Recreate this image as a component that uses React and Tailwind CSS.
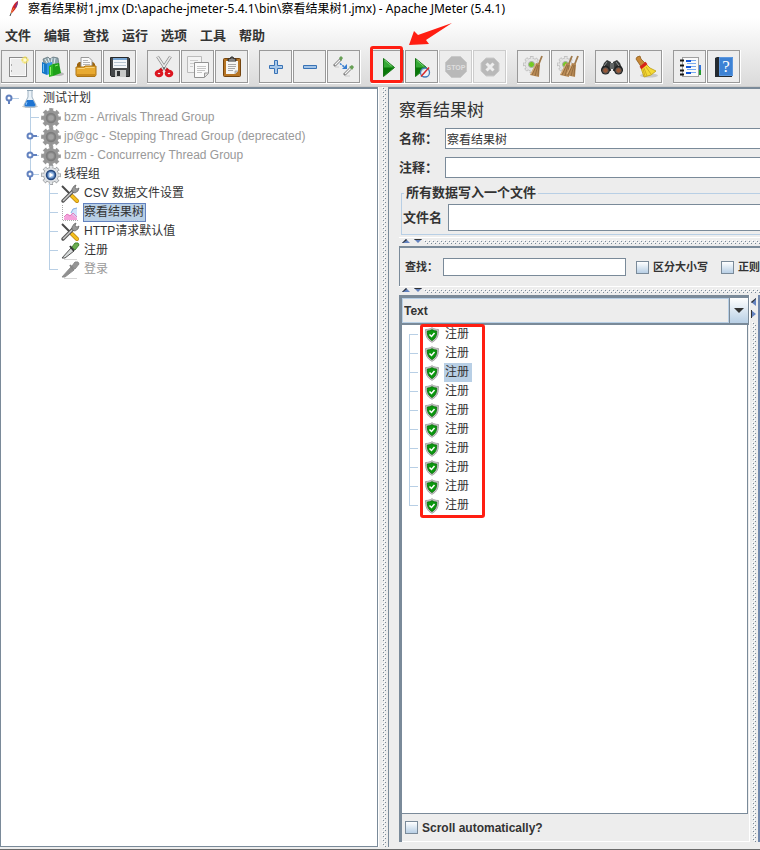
import React from "react";

const dots =
  "bg-[#ededed] bg-[conic-gradient(from_270deg_at_1px_1px,#7a8a99_90deg,transparent_0),conic-gradient(from_270deg_at_1px_1px,#7a8a99_90deg,transparent_0),conic-gradient(from_270deg_at_1px_1px,#ffffff_90deg,transparent_0),conic-gradient(from_270deg_at_1px_1px,#ffffff_90deg,transparent_0)] [background-size:4px_4px] [background-position:1px_1px,3px_3px,0px_0px,2px_2px]";

function Svg({ size = "size-6", box = "0 0 24 24", children }) {
  return (
    <svg viewBox={box} className={`${size} shrink-0`} fill="none" aria-hidden="true">
      {children}
    </svg>
  );
}

function GearBody({ fill, edge }) {
  return (
    <>
      <circle cx="10" cy="10" r="7.900" stroke={edge} strokeWidth="4" strokeDasharray="3.700 2.504" strokeDashoffset="1.850" />
      <circle cx="10" cy="10" r="7.500" fill={fill} stroke={edge} strokeWidth=".8" />
      <circle cx="10" cy="10" r="7.900" stroke={fill} strokeWidth="2.600" strokeDasharray="2.600 3.604" strokeDashoffset="1.300" />
    </>
  );
}

/* ---------- toolbar icons ---------- */

const NewIcon = () => (
  <Svg>
    <rect x="3.5" y="2.500" width="17" height="19" fill="#ececec" stroke="#8a8a8a" />
    <rect x="4.5" y="3.500" width="15" height="17" stroke="#fafafa" />
    <path d="M5.500 9v2M5.500 15v2" stroke="#aaa" />
    <circle cx="19" cy="5" r="3.500" fill="#f5e46a" opacity=".6" />
    <path d="M19 1.500v7M15.500 5h7" stroke="#f4dc3c" />
    <circle cx="19" cy="5" r="1.800" fill="#fffbd0" />
  </Svg>
);

const TemplatesIcon = () => (
  <Svg>
    <ellipse cx="17" cy="19" rx="7" ry="2" fill="#b9b9b9" />
    <path d="M3 4l5-2 2 2 3-2 5 1 1 7-14 2z" fill="#8fa4ac" stroke="#5a6d75" strokeWidth=".7" />
    <path d="M5 4l3 5M8 3l2 6M12 3l-1 6M15 3l-1 6" stroke="#e1f0f6" />
    <path d="M2 7l5 2v11l-5-2z" fill="#1677c8" />
    <path d="M7 8l5-1v11l-5 2z" fill="#3596e0" />
    <path d="M3.500 9v8" stroke="#6ebdf4" />
    <path d="M9 11l4-2v12l-4 1z" fill="#2fb824" />
    <path d="M13 9l6-1 2 10-8 3z" fill="#1da019" />
    <path d="M10.500 12v8M15 11l3-1" stroke="#8eee6e" />
  </Svg>
);

const OpenIcon = () => (
  <Svg>
    <path d="M3 9l2-2h14l2 2v11H3z" fill="#9c6410" />
    <path d="M7 2.500h8l3 3V14H7z" fill="#fafafa" stroke="#999" />
    <path d="M9 5.500h5M9 7.500h7M9 9.500h7" stroke="#b5b5b5" />
    <path d="M2 12h8l1-1h11v9l-1 1.500H3L2 20z" fill="#e8aa31" stroke="#ad7515" />
    <path d="M3.500 13.500h7l1-1h9" stroke="#f7d37c" />
    <path d="M3 19h18v2H3z" fill="#cb8b1d" />
  </Svg>
);

const SaveIcon = () => (
  <Svg>
    <path d="M2.500 2.500h18l1 1v18h-18l-1-1z" fill="#45484a" stroke="#262829" />
    <rect x="5" y="3" width="14" height="10" fill="#f3f6f9" />
    <path d="M5 4h14" stroke="#76a5d4" strokeWidth="2" />
    <path d="M6 7.500h12M6 10.500h12" stroke="#b7c5d2" />
    <rect x="7" y="15" width="11" height="7" fill="#c8cac9" />
    <rect x="9" y="16" width="3" height="5" fill="#303335" />
  </Svg>
);

const CutIcon = () => (
  <Svg>
    <path d="M5.500 1.500l8.500 13M18.500 1.500L10 14.500" stroke="#888" strokeWidth="3" />
    <path d="M5.500 1.500l8.500 13M18.500 1.500L10 14.500" stroke="#e9e9e9" strokeWidth="1.500" />
    <path d="M10 14l-3 3M14 14l3 3" stroke="#c81018" strokeWidth="3.500" />
    <ellipse cx="7" cy="18.500" rx="2.800" ry="2.300" stroke="#dc1721" strokeWidth="3" />
    <ellipse cx="17" cy="18.500" rx="2.800" ry="2.300" stroke="#dc1721" strokeWidth="3" />
    <circle cx="12" cy="13" r="1" fill="#555" />
  </Svg>
);

const CopyIcon = () => (
  <Svg>
    <path d="M1.500 1.500h14v16h-14z" fill="#f3f3f3" stroke="#bbb" />
    <path d="M4 5.500h8M4 8.500h5M4 11.500h3" stroke="#ccc" />
    <path d="M8.500 7.500h14v11l-4 4h-10z" fill="#fafafa" stroke="#929292" />
    <path d="M11 11.500h9M11 13.500h9M11 15.500h8M11 17.500h5" stroke="#c5c5c5" />
    <path d="M18.500 22v-4h4" fill="#ddd" stroke="#999" />
  </Svg>
);

const PasteIcon = () => (
  <Svg>
    <rect x="3.500" y="3.500" width="17" height="18" rx="1" fill="#b77524" stroke="#744510" />
    <path d="M6 6h12v10l-3 3H6z" fill="#f6f6f4" />
    <path d="M8 9.500h8M8 11.500h8M8 13.500h7M8 15.500h5" stroke="#a9a9a9" />
    <path d="M15 19v-3h3" fill="#ccc" stroke="#999" strokeWidth=".7" />
    <path d="M8 6V4h2l1-2h2l1 2h2v2z" fill="#666" stroke="#303030" />
    <path d="M9 5h6" stroke="#aaa" />
  </Svg>
);

const PlusIcon = () => (
  <Svg>
    <path d="M10.500 5.500h3v5h5v3h-5v5h-3v-5h-5v-3h5z" fill="#b6d2ee" stroke="#3872b5" />
    <path d="M12 6.500v11M6.500 12h11" stroke="#9cc0e6" />
  </Svg>
);

const MinusIcon = () => (
  <Svg>
    <path d="M5.500 10.500h13v3h-13z" fill="#a2c4e8" stroke="#3872b5" />
  </Svg>
);

const ToggleIcon = () => (
  <Svg>
    <path d="M2 11l7-7" stroke="#808080" strokeWidth="2.800" />
    <path d="M3 10l5-5" stroke="#f5f5f5" strokeWidth="1.300" />
    <path d="M7 3l2-2 2 2-2 3z" fill="#679f55" />
    <path d="M12 20l6-6" stroke="#808080" strokeWidth="2.800" />
    <path d="M13 19l5-5" stroke="#f5f5f5" strokeWidth="1.300" />
    <path d="M17 12l3-2 2 2-2 3z" fill="#679f55" />
    <path d="M8 8.500l5 4" stroke="#367dd0" strokeWidth="1.500" strokeDasharray="2 1" />
    <path d="M15 9v5h-5z" fill="#367dd0" />
    <path d="M3 12h4M13 21h5" stroke="#cbcbcb" />
  </Svg>
);

const Play = () => (
  <>
    <path d="M7.500 3.500l11 9-11 9z" fill="#36a936" stroke="#167316" />
    <path d="M8 12.500h10l-10 8z" fill="#087808" />
    <path d="M8.500 5l7 6" stroke="#7dd577" />
  </>
);

const StartIcon = () => (
  <Svg>
    <Play />
  </Svg>
);

const StartNoPauseIcon = () => (
  <Svg>
    <g transform="translate(-2 0)">
      <Play />
    </g>
    <circle cx="15" cy="17.500" r="4.500" fill="#eaf2fa" fillOpacity=".85" stroke="#437cb8" strokeWidth="1.300" />
    <path d="M11 21.500l8-9" stroke="#d92828" strokeWidth="1.500" />
  </Svg>
);

const StopIcon = () => (
  <Svg>
    <path d="M7.500 1.500h9l6 6v9l-6 6h-9l-6-6v-9z" fill="#b9b9b9" stroke="#c9c9c9" />
    <text x="12" y="15" textAnchor="middle" fontSize="7" fontWeight="700" fontFamily="Liberation Sans, sans-serif" fill="#dedede">
      STOP
    </text>
  </Svg>
);

const ShutdownIcon = () => (
  <Svg>
    <path d="M8 3h8l5 5v8l-5 5H8l-5-5V8z" fill="#b9b9b9" stroke="#cacaca" />
    <path d="M8.500 8.500l7 7M15.500 8.500l-7 7" stroke="#eeeeee" strokeWidth="3" />
  </Svg>
);

const Broom = ({ x = 0 }) => (
  <g transform={`translate(${x} 0)`}>
    <path d="M22 1l-4 10" stroke="#a07a4c" strokeWidth="1.800" />
    <path d="M16 8l4 1-1 13-9-2z" fill="#ba8b55" />
    <path d="M17 9l-5 11M18 10l-3 11M19 10l-1 11" stroke="#8f6a40" strokeWidth=".9" />
    <path d="M16 9l-5 10" stroke="#dcb483" />
  </g>
);

const PaleGear = () => (
  <>
    <g transform="translate(1 1) scale(.85)">
      <GearBody fill="#e4e4e4" edge="#b4b4b4" />
    </g>
    <circle cx="9.500" cy="9.500" r="3" fill="#73cb23" stroke="#aaa" />
  </>
);

const ClearIcon = () => (
  <Svg>
    <PaleGear />
    <Broom x={-2} />
  </Svg>
);

const ClearAllIcon = () => (
  <Svg>
    <PaleGear />
    <Broom x={-6} />
    <Broom />
  </Svg>
);

const SearchIcon = () => (
  <Svg>
    <path d="M4 8l3-3 4 2v9H1zM13 7l4-2 3 3 3 8H13z" fill="#383b3b" />
    <path d="M10 8h4v6h-4z" fill="#626666" />
    <circle cx="5.500" cy="15" r="4.500" fill="#202222" />
    <circle cx="18.500" cy="15" r="4.500" fill="#202222" />
    <circle cx="5.500" cy="15.500" r="2.800" fill="#985837" stroke="#555" />
    <circle cx="18.500" cy="15.500" r="2.800" fill="#985837" stroke="#555" />
    <path d="M7 7l-3 4M16 7l3 4" stroke="#8d9191" />
  </Svg>
);

const ResetSearchIcon = () => (
  <Svg>
    <ellipse cx="15" cy="20.500" rx="9" ry="2" fill="#c9c9c9" />
    <path d="M3 2l3-1 1 3 5 5-4 4-4-6-2-3z" fill="#c78735" stroke="#8f5c19" strokeWidth=".8" />
    <path d="M12 9l4 4 6 3-5 4-7 2-3-9z" fill="#f5da35" stroke="#bb9c14" strokeWidth=".8" />
    <path d="M10 13l3 8M12 12l5 7M9 14l2 7" stroke="#cfae20" />
    <path d="M6.500 13l6-5" stroke="#d82319" strokeWidth="3" />
  </Svg>
);

const FunctionIcon = () => (
  <Svg>
    <path d="M21 10h2v5h-2z" fill="#3274d8" />
    <path d="M21 15h2v5h-2z" fill="#239a2e" />
    <rect x="4.500" y="2.500" width="16" height="19" fill="#fafafa" stroke="#a0a0a0" />
    <path d="M2 5.500h4M2 10.500h4M2 15.500h4M2 19.500h4" stroke="#151515" strokeWidth="2" />
    <path d="M8 6h5M8 12h5M8 18h5" stroke="#1156d8" strokeWidth="2" />
    <path d="M9 8.500h9M13 5.500h5M9 14.500h9M13 11.500h5M13 17.500h5" stroke="#79aaf0" />
  </Svg>
);

const HelpIcon = () => (
  <Svg>
    <path d="M3 3l2-1h15v20H3z" fill="#252b31" />
    <path d="M7 2h14v19H7z" fill="#3d82d4" />
    <path d="M7.500 2.500h13v18h-13z" stroke="#5c97de" />
    <text x="14" y="17" textAnchor="middle" fontSize="17" fontFamily="Liberation Serif, serif" fill="#fff">
      ?
    </text>
  </Svg>
);

const groups = [
  [["新建", NewIcon], ["模板", TemplatesIcon], ["打开", OpenIcon], ["保存", SaveIcon]],
  [["剪切", CutIcon], ["复制", CopyIcon], ["粘贴", PasteIcon]],
  [["展开", PlusIcon], ["折叠", MinusIcon], ["切换", ToggleIcon]],
  [["启动", StartIcon], ["不停顿开始", StartNoPauseIcon], ["停止", StopIcon, true], ["关闭", ShutdownIcon, true]],
  [["清除", ClearIcon], ["清除全部", ClearAllIcon]],
  [["查找", SearchIcon], ["重置搜索", ResetSearchIcon]],
  [["函数助手", FunctionIcon], ["帮助", HelpIcon]],
];

/* ---------- tree icons ---------- */

const Flask = () => (
  <Svg size="size-5" box="0 0 20 20">
    <ellipse cx="10" cy="17.500" rx="8" ry="1.500" fill="#c8c8c8" />
    <path d="M8 2v6l-4 8 1 2h10l1-2-4-8V2" fill="#eaf2f8" stroke="#9fb2c2" />
    <path d="M7 11h6l2.500 5-1 1.500h-9l-1-1.500z" fill="#1f74d2" />
    <path d="M7 13l-1 3" stroke="#8ec4fa" />
    <path d="M7 1.500h6" stroke="#8fa5b5" />
  </Svg>
);

const Gear = ({ on }) => (
  <Svg size="size-5" box="0 0 20 20">
    <GearBody fill={on ? "#dfe2e5" : "#969696"} edge={on ? "#96999c" : "#9c9c9c"} />
    <circle cx="10" cy="10" r="4.500" fill={on ? "#5b86c0" : "#8a8a8a"} stroke={on ? "#24477c" : "#7d7d7d"} strokeWidth="1.500" />
    <circle cx="10" cy="10" r="2.800" fill={on ? "#9abbe3" : "#a2a2a2"} />
    {on && <path d="M8.500 7.500l4 2.500-4 2.500z" fill="#fff" />}
  </Svg>
);

const Tools = () => (
  <Svg size="size-5" box="0 0 20 20">
    <path d="M2 2l9 9" stroke="#4a4a4a" strokeWidth="2" />
    <path d="M12 12l5 5" stroke="#b77d0b" strokeWidth="4" strokeLinecap="round" />
    <path d="M12 12l5 5" stroke="#f4c01e" strokeWidth="2.800" strokeLinecap="round" />
    <path d="M3 17L14 6" stroke="#555" strokeWidth="3.500" strokeLinecap="round" />
    <path d="M3 17L14 6" stroke="#ccc" strokeWidth="1.500" />
    <path d="M12 5l2-3 2-1-1 3 2 1 2-1-1 3-3 2-3-1z" fill="#999" stroke="#606060" strokeWidth=".7" />
  </Svg>
);

const Graph = () => (
  <Svg size="size-5" box="0 0 20 20">
    <path d="M2.500 2v15.500H18" stroke="#aaa" strokeDasharray="1 1" />
    <path d="M11 10l2-4 4-1v10h-6z" fill="#cfe3fa" />
    <path d="M11 10l2-4 4-1" stroke="#83acde" />
    <path d="M4 15l3-4 3 1 2-1 5 4v2H4z" fill="#f5a2db" />
    <path d="M4 14l3-3 3 2 3-3 4 4" stroke="#e07cc0" />
  </Svg>
);

const Dropper = ({ off }) => (
  <Svg size="size-5" box="0 0 20 20">
    <path d="M4 18.500h13" stroke="#d8d8d8" />
    <path d="M2 17l9-10 3 3-9 7z" fill={off ? "#8f8f8f" : "#d6dada"} stroke={off ? "#8f8f8f" : "#555"} />
    <path d="M10 5l4 5" stroke={off ? "#858585" : "#333"} strokeWidth="2" />
    <path d="M12 6l3-4h3l1 2-4 5z" fill={off ? "#969696" : "#6cae50"} stroke={off ? "#8b8b8b" : "#458435"} />
  </Svg>
);

const Shield = () => (
  <Svg size="size-4" box="0 0 16 16">
    <path d="M8 .7c2 1.300 4 1.800 6.500 1.800 0 6-1 10-6.500 12.800C2.500 12.500 1.500 8.500 1.500 2.500 4 2.500 6 2 8 .7z" fill="#c4c4c4" stroke="#a8a8a8" />
    <path d="M8 2.700c1.500.9 3 1.300 4.700 1.400 0 4.400-1 7.400-4.700 9.400-3.700-2-4.700-5-4.700-9.400C5 4 6.500 3.600 8 2.700z" fill="#0b970f" stroke="#087309" strokeWidth=".9" />
    <path d="M5.500 7.500l2 2 3-3.500" stroke="#fff" strokeWidth="1.500" />
  </Svg>
);

function Handle({ open }) {
  return (
    <svg viewBox="0 0 12 12" className="size-3 shrink-0" fill="none" aria-hidden="true">
      <path d={open ? "M4 6v5" : "M6 5h5"} stroke="#6382bf" strokeWidth="2" />
      {open && <path d="M7 5.500h5" stroke="#b8cfe5" />}
      <circle cx="4" cy="5" r="2.500" fill="#fff" stroke="#6382bf" strokeWidth="2" />
    </svg>
  );
}

function Branch({ first, last, handle }) {
  return (
    <span className="relative flex h-[19px] w-[11px] shrink-0 flex-col">
      <span className={`h-[10px] w-[9px] border-b border-[#b8cfe5] ${first ? "" : "border-l"}`} />
      <span className={`flex-1 border-[#b8cfe5] ${last ? "" : "border-l"}`} />
      {handle && (
        <span className="absolute -left-1 top-1">
          <Handle open={handle === "open"} />
        </span>
      )}
    </span>
  );
}

const threadGroups = [
  { text: "bzm - Arrivals Thread Group", off: true },
  { text: "jp@gc - Stepping Thread Group (deprecated)", off: true, handle: "closed" },
  { text: "bzm - Concurrency Thread Group", off: true, handle: "closed" },
  { text: "线程组", handle: "open", last: true },
];

const elements = [
  { text: "CSV 数据文件设置", icon: <Tools /> },
  { text: "察看结果树", icon: <Graph />, selected: true },
  { text: "HTTP请求默认值", icon: <Tools /> },
  { text: "注册", icon: <Dropper /> },
  { text: "登录", icon: <Dropper off />, off: true, last: true },
];

function TestPlanTree() {
  return (
    <ul className="whitespace-nowrap text-xs leading-[17px]">
      <li>
        <div className="flex h-[19px] items-center pl-1">
          <Handle open />
          <span className="mr-px w-[2px] border-t border-[#b8cfe5]" />
          <Flask />
          <span className="ml-[3px]">测试计划</span>
        </div>
        <ul className="pl-[29px]">
          {threadGroups.map((g) => (
            <li key={g.text} className="flex h-[19px] items-center">
              <Branch last={g.last} handle={g.handle} />
              <Gear on={!g.off} />
              <span className={`ml-[3px] ${g.off ? "text-[#999999]" : ""}`}>{g.text}</span>
            </li>
          ))}
        </ul>
        <ul className="pl-12">
          {elements.map((e) => (
            <li key={e.text} className="flex h-[19px] items-center">
              <Branch last={e.last} />
              {e.icon}
              <span
                className={`ml-[3px] border pr-px ${
                  e.selected ? "border-[#6382bf] bg-[#b8cfe5]" : "border-transparent"
                } ${e.off ? "text-[#999999]" : ""}`}
              >
                {e.text}
              </span>
            </li>
          ))}
        </ul>
      </li>
    </ul>
  );
}

function HorizontalDivider() {
  return (
    <div className="flex h-[9px] items-start gap-[2px] border-t border-white pt-px pl-[3px]">
      <svg viewBox="0 0 20 5" className="h-[5px] w-5 shrink-0" aria-hidden="true">
        <path d="M4 0l4 4H0z" fill="#6382bf" />
        <path d="M4 0L0 4h1l4-3z" fill="#333" />
        <path d="M12 0h8l-4 4z" fill="#6382bf" />
        <path d="M12 0h8l-1 1h-6z" fill="#333" />
      </svg>
      <span className={`mt-px h-1 flex-1 ${dots}`} />
    </div>
  );
}

function Check({ id, label, small }) {
  return (
    <div className="flex shrink-0 items-center gap-1">
      <input
        id={id}
        type="checkbox"
        className="size-[13px] appearance-none border border-[#7a8a99] bg-linear-to-b from-white to-[#b8cfe5] checked:bg-[#6382bf]"
      />
      <label htmlFor={id} className={`font-bold whitespace-nowrap ${small ? "text-[11px]" : "text-xs"}`}>
        {label}
      </label>
    </div>
  );
}

const field = "min-w-0 flex-1 border border-r-0 border-[#7a8a99] bg-white px-px text-xs outline-none";

function ResultTree() {
  return (
    <ul className="mr-px flex-1 border-r border-b border-[#7a8a99] bg-white pl-[7px] text-xs leading-[19px]">
      {Array.from({ length: 10 }, (_, i) => (
        <li key={i} className="flex h-[19px] items-center">
          <Branch first={i === 0} last={i === 9} />
          <span className="relative ml-1">
            <Shield />
            {i === 0 && (
              <span className="pointer-events-none absolute -top-[3px] -left-1 h-[194px] w-[65px] rounded-[3px] border-3 border-[#ff1e12]" />
            )}
          </span>
          <span className={`ml-1 px-px ${i === 2 ? "bg-[#b8cfe5] pr-[3px]" : ""}`}>注册</span>
        </li>
      ))}
    </ul>
  );
}

export default function App() {
  return (
    <div className="flex min-h-screen w-full flex-col overflow-hidden border-b border-[#6b6b6b] bg-[#ededed] font-['Liberation_Sans','Noto_Sans_CJK_SC',sans-serif] text-[#333333]">
      <header>
        <div className="flex h-[18px] items-center gap-2 bg-white pl-2 font-['Noto_Sans','Noto_Sans_CJK_SC',sans-serif] text-xs leading-[18px] whitespace-nowrap text-black">
          <svg viewBox="0 0 12 16" className="h-4 w-3" fill="none" aria-hidden="true">
            <path d="M2 15l2-5" stroke="#444" />
            <path d="M3 11C4 6 6 2 10 0c0 5-3 9-6 12z" fill="#d22128" />
            <path d="M7 6c1-3 2-5 3-6 0 3-1 5-2 7z" fill="#743c8b" />
            <path d="M3 12l3-5" stroke="#f08b35" />
          </svg>
          <h1>察看结果树1.jmx (D:\apache-jmeter-5.4.1\bin\察看结果树1.jmx) - Apache JMeter (5.4.1)</h1>
        </div>
        <div className="bg-linear-to-b from-white to-[#dadada]">
          <nav className="flex h-8 items-center gap-[13px] pt-1 pl-[5px] text-[13px] leading-5 font-bold">
            {["文件", "编辑", "查找", "运行", "选项", "工具", "帮助"].map((m) => (
              <button key={m} type="button" className="whitespace-nowrap">
                {m}
              </button>
            ))}
          </nav>
          <div className="flex gap-[10px] pb-[2px] pl-px">
            {groups.map((group, gi) => (
              <div key={gi} className="flex">
                {group.map(([name, Icon, disabled]) => (
                  <div key={name} className="relative border-r border-b border-white">
                    <button
                      type="button"
                      aria-label={name}
                      disabled={disabled}
                      className={`flex size-[33px] items-center justify-center border bg-[#ededed] ${
                        disabled ? "border-[#cccccc]" : "border-[#999999]"
                      }`}
                    >
                      <Icon />
                    </button>
                    {name === "启动" && (
                      <>
                        <span className="pointer-events-none absolute -top-1 -left-px h-[37px] w-[33px] rounded-[3px] border-3 border-[#ff1e12]" />
                        <svg
                          viewBox="0 0 46 24"
                          className="pointer-events-none absolute -top-[27px] left-[37px] h-6 w-[46px]"
                          aria-hidden="true"
                        >
                          <path d="M1 22L6 8l4 4L44 0 18 17l3 4z" fill="#ff1e12" />
                        </svg>
                      </>
                    )}
                  </div>
                ))}
              </div>
            ))}
          </div>
        </div>
      </header>

      <main className="flex flex-1 border-t border-[#cccccc] pb-[2px]">
        <section className="w-[378px] shrink-0 border border-t-2 border-[#7a8a99] bg-white">
          <TestPlanTree />
        </section>
        <div className="flex w-[10px] shrink-0 border-l border-white pl-[3px]">
          <span className={`w-1 ${dots}`} />
        </div>

        <section className="flex min-w-0 flex-1 flex-col border-t-2 border-l border-[#7a8a99] pb-[5px] pl-[10px]">
          <h2 className="pt-[10px] text-[17px] leading-6">察看结果树</h2>
          <div className="mt-[5px] flex h-[21px] items-center">
            <label htmlFor="name" className="w-[46px] text-[13px] font-bold">
              名称：
            </label>
            <input id="name" defaultValue="察看结果树" className={`h-full ${field}`} />
          </div>
          <div className="mt-2 flex h-[21px] items-center">
            <label htmlFor="comment" className="w-[46px] text-[13px] font-bold">
              注释：
            </label>
            <input id="comment" className={`h-full ${field}`} />
          </div>
          <fieldset className="mt-1 ml-[2px] border border-r-0 border-[#b8cfe5] pb-[3px]">
            <legend className="ml-[2px] px-[2px] text-[13px] leading-[22px] font-bold">所有数据写入一个文件</legend>
            <div className="flex h-[27px] items-center">
              <label htmlFor="file" className="w-[46px] pl-px text-[13px] font-bold">
                文件名
              </label>
              <input id="file" className={`h-full ${field}`} />
            </div>
          </fieldset>
          <div className="mt-[2px]">
            <HorizontalDivider />
          </div>
          <div className="flex h-[40px] items-center overflow-hidden border-t-2 border-l border-[#7a8a99] pl-[5px]">
            <label htmlFor="find" className="w-[38px] shrink-0 text-[11px] font-bold whitespace-nowrap">
              查找：
            </label>
            <input
              id="find"
              className="mr-[10px] h-[18px] w-[183px] shrink-0 border border-[#7a8a99] bg-white px-px text-xs outline-none"
            />
            <Check id="case" label="区分大小写" small />
            <span className="w-[13px] shrink-0" />
            <Check id="regex" label="正则" small />
          </div>
          <HorizontalDivider />
          <div className="flex flex-1">
            <div className="flex min-w-0 flex-1 flex-col border-t-3 border-l-3 border-[#7a8a99]">
              <div className="flex h-[27px] shrink-0 border-b-2 border-[#7a8a99]">
                <select
                  aria-label="Text"
                  className="min-w-0 flex-1 appearance-none border border-[#b8cfe5] bg-[#ededed] pl-px text-xs font-bold outline-none"
                >
                  <option>Text</option>
                </select>
                <span className="pointer-events-none flex w-5 items-center justify-center border-x border-[#7a8a99] bg-linear-to-b from-white to-[#b8cfe5]">
                  <svg viewBox="0 0 10 5" className="h-[5px] w-[10px]" aria-hidden="true">
                    <path d="M0 0h10L5 5z" fill="#333" />
                  </svg>
                </span>
              </div>
              <ResultTree />
              <div className="flex h-7 items-center border-b border-white pl-[3px]">
                <Check id="scroll" label="Scroll automatically?" />
              </div>
            </div>
            <div className="flex w-[9px] shrink-0 flex-col border-l border-white pl-px">
              <svg viewBox="0 0 5 24" className="mt-[3px] h-6 w-[5px] shrink-0" aria-hidden="true">
                <path d="M5 0v8L0 4z" fill="#6382bf" />
                <path d="M5 0L0 4l1 1 4-4z" fill="#333" />
                <path d="M0 12v8l5-4z" fill="#6382bf" />
                <path d="M0 12v8h1v-8z" fill="#333" />
              </svg>
              <span className={`ml-px w-1 flex-1 ${dots}`} />
            </div>
            <div className="w-[2px] shrink-0 bg-[#6f86ab]" />
          </div>
        </section>
      </main>
    </div>
  );
}
